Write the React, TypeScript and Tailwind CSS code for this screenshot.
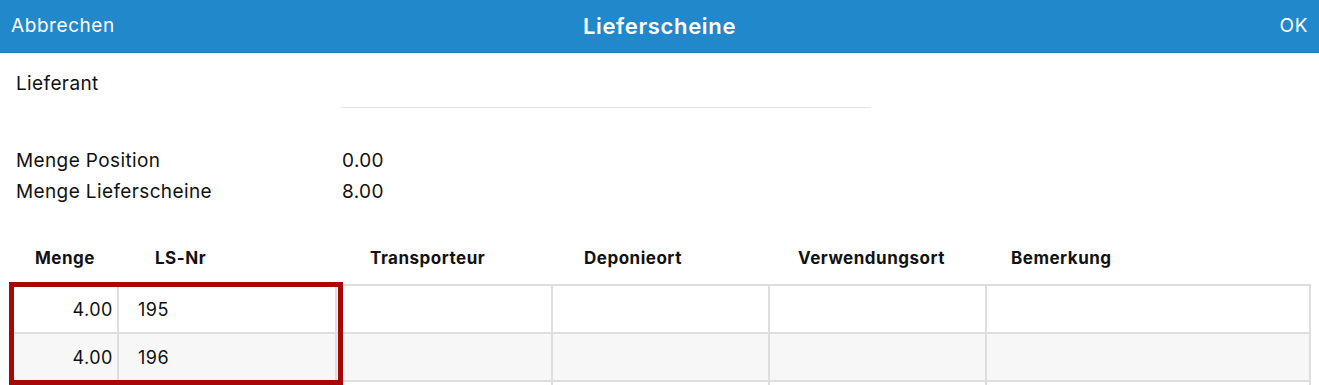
import React from "react";

const rows = [
  { menge: "4.00", nr: "195" },
  { menge: "4.00", nr: "196" },
  { menge: "", nr: "" },
];

const headers = [
  { label: "Menge", w: "w-[108px]", pl: "pl-[25px]" },
  { label: "LS-Nr", w: "w-[218px]", pl: "pl-[37px]" },
  { label: "Transporteur", w: "w-[216px]", pl: "pl-[34px]" },
  { label: "Deponieort", w: "w-[217px]", pl: "pl-[32px]" },
  { label: "Verwendungsort", w: "w-[217px]", pl: "pl-[29px]" },
  { label: "Bemerkung", w: "flex-1", pl: "pl-[25px]" },
];

export default function App() {
  return (
    <div className="w-[1319px] h-[385px] overflow-hidden bg-white font-['Inter','Noto_Sans',sans-serif] text-[#111]">
      {/* Navigationsleiste */}
      <div className="h-[53px] bg-[#2288cc] border-b border-[#1f7bb9] grid grid-cols-[1fr_auto_1fr] items-center px-[11px] text-white">
        <span className="text-[19px] tracking-[0.03em]">Abbrechen</span>
        <span className="text-[22px] font-semibold tracking-[0.03em]">Lieferscheine</span>
        <span className="text-[19px] tracking-[0.03em] text-right">OK</span>
      </div>

      <div className="px-4 pt-[19px] text-[19px] tracking-[0.02em]">
        <div className="flex items-start h-[24px] leading-[24px]">
          <span className="w-[325px]">Lieferant</span>
        </div>
        <div className="ml-[325px] w-[530px] h-px bg-[#e3e3e3] mt-[11px]" />

        <div className="mt-[37px] leading-[31px]">
          <div className="flex">
            <span className="w-[326px]">Menge Position</span>
            <span>0.00</span>
          </div>
          <div className="flex">
            <span className="w-[326px]">Menge Lieferscheine</span>
            <span>8.00</span>
          </div>
        </div>
      </div>

      {/* Tabelle */}
      <div className="relative ml-[10px] w-[1301px] mt-[31px]">
        <div className="flex h-[46px] items-start text-[17px] font-bold leading-[20px] tracking-[0.03em] pt-[10px]">
          {headers.map((h) => (
            <div key={h.label} className={`${h.w} ${h.pl} shrink-0`}>
              {h.label}
            </div>
          ))}
        </div>
        <div className="border-t-2 border-l-2 border-[#dedede]">
          {rows.map((r, i) => (
            <div
              key={i}
              className={`flex h-[48px] text-[18px] tracking-[0.03em] ${i % 2 === 1 ? "bg-[#f7f7f7]" : "bg-white"}`}
            >
              <div className="w-[107px] border-r-2 border-b-2 border-[#dedede] flex items-center justify-end pr-[4px]">
                {r.menge}
              </div>
              <div className="w-[218px] border-r-2 border-b-2 border-[#dedede] flex items-center pl-[19px]">
                {r.nr}
              </div>
              <div className="w-[216px] border-r-2 border-b-2 border-[#dedede]" />
              <div className="w-[217px] border-r-2 border-b-2 border-[#dedede]" />
              <div className="w-[217px] border-r-2 border-b-2 border-[#dedede]" />
              <div className="flex-1 border-r-2 border-b-2 border-[#dedede]" />
            </div>
          ))}
        </div>
        {/* Markierung */}
        <div className="absolute left-[-1px] top-[44px] w-[334px] h-[103px] border-[5px] border-[#a40808] pointer-events-none" />
      </div>
    </div>
  );
}
